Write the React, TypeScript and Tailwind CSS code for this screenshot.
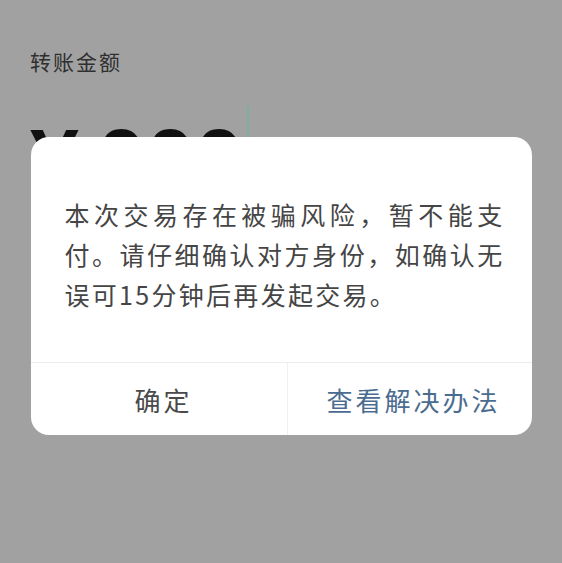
export default function App() {
  const cjk = { fontFamily: '"Noto Sans CJK SC", "Noto Sans", sans-serif' };

  return (
    <div lang="zh-CN" className="relative h-[563px] w-[562px] overflow-hidden bg-[#a1a1a1]" style={cjk}>
      {/* 转账页面（被弹窗遮住） */}
      <div className="flex flex-col pl-[30px] pt-[48px]">
        <div className="text-[21px] leading-[26px] tracking-[2px] text-[#2f2f2f]">转账金额</div>
        <div className="mt-[42px] flex items-start">
          <span className="font-['Liberation_Sans',sans-serif] text-[88px] font-bold leading-none text-[#111]">
            ¥<span className="ml-[18px]">000</span>
          </span>
          <span className="ml-[3px] mt-[-11px] h-[60px] w-[2px] bg-[#7fae9c]" />
        </div>
      </div>

      {/* 弹窗 */}
      <div className="absolute inset-0 flex justify-center pt-[137px]">
        <div className="flex h-[298px] w-[501px] flex-col overflow-hidden rounded-[18px] bg-white">
          <div className="flex-1 pt-[57px]">
            <p className="ml-[34px] w-[440px] text-justify text-[25px] leading-[40px] tracking-[2.3px] text-[#454545] [text-align-last:left] [text-justify:inter-character]">
              本次交易存在被骗风险，暂不能支付。请仔细确认对方身份，如确认无误可15分钟后再发起交易。
            </p>
          </div>
          <div className="flex h-[73px] border-t border-[#ececec]">
            <button className="flex flex-1 items-center justify-center border-r border-[#f0f0f0] pl-[10px] text-[26px] tracking-[3px] text-[#4a4a4a]">
              确定
            </button>
            <button className="flex w-[244px] items-center justify-center pl-[8px] text-[26px] tracking-[3px] text-[#4a6c90]">
              查看解决办法
            </button>
          </div>
        </div>
      </div>
    </div>
  );
}
